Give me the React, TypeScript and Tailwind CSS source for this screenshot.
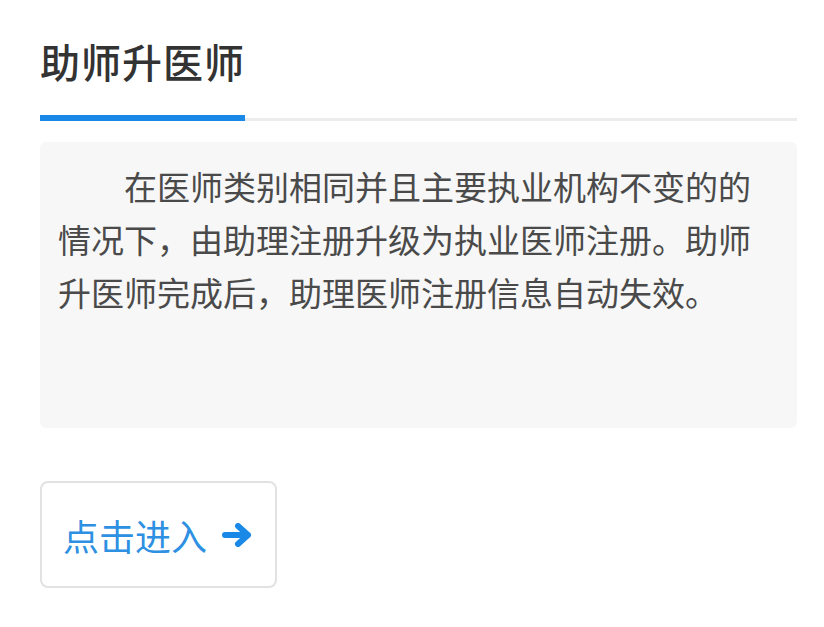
export default function App() {
  return (
    <div
      className="min-h-screen bg-white pl-10 pr-[27px] pt-[37px] text-[#333]"
      style={{ fontFamily: '"Noto Sans CJK SC", "Noto Sans", sans-serif' }}
    >
      {/* tab header */}
      <div className="relative border-b-[3px] border-[#ececec]">
        <div className="inline-block pb-[33px]">
          <h1 className="text-[40px] leading-[48px] font-medium tracking-[1px] text-[#333]">助师升医师</h1>
        </div>
        <div className="absolute -bottom-[3px] left-0 h-[6px] w-[205px] bg-[#1a88e6]" />
      </div>

      {/* description */}
      <div className="mt-[21px] min-h-[286px] rounded-md bg-[#f7f7f7] px-[18px] pt-[18px]">
        <p className="indent-[66px] text-[33px] leading-[53px] text-[#4a4a4a]">
          在医师类别相同并且主要执业机构不变的的情况下，由助理注册升级为执业医师注册。助师升医师完成后，助理医师注册信息自动失效。
        </p>
      </div>

      {/* enter button */}
      <button className="mt-[53px] flex h-[107px] w-[237px] items-center gap-[15px] rounded-lg border-2 border-[#e2e2e2] bg-white pl-[21px] text-[36px] text-[#2d90e2]">
        <span>点击进入</span>
        <svg viewBox="0 0 30 24" className="h-[24px] w-[30px]" fill="none" stroke="#1a88e6" strokeWidth="6" strokeLinecap="round" strokeLinejoin="round">
          <path d="M3 12h23M16 3l10 9-10 9" />
        </svg>
      </button>
    </div>
  );
}
